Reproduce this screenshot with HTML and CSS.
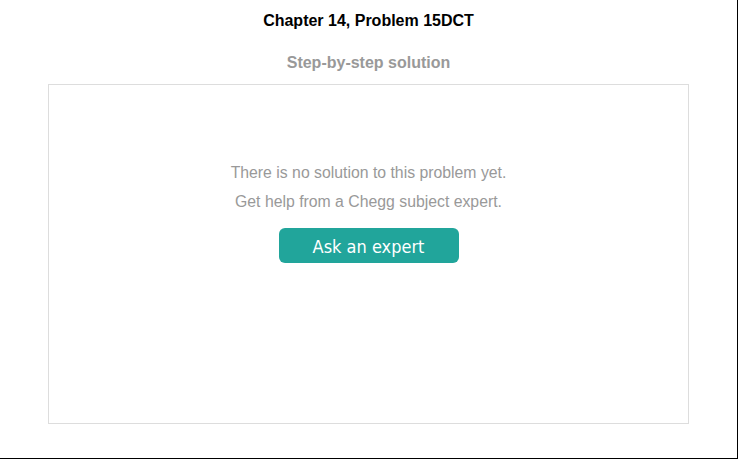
FILE: index.html
```html
<!DOCTYPE html>
<html>
<head>
<meta charset="utf-8">
<link rel="stylesheet" href="styles.css">
</head>
<body>
<div class="frame">
  <h1 class="title">Chapter 14, Problem 15DCT</h1>
  <h2 class="subtitle">Step-by-step solution</h2>
  <div class="box">
    <p class="msg">There is no solution to this problem yet.</p>
    <p class="msg">Get help from a Chegg subject expert.</p>
    <button class="ask">Ask an expert</button>
  </div>
</div>
</body>
</html>
```
FILE: styles.css
```css
html, body { margin: 0; padding: 0; background: #fff; }
.frame {
  box-sizing: border-box;
  width: 738px;
  height: 459px;
  border-right: 1px solid #000;
  border-bottom: 1px solid #000;
  font-family: "Liberation Sans", Arial, sans-serif;
  display: flex;
  flex-direction: column;
  align-items: center;
  padding-top: 11px;
}
.title {
  margin: 0;
  font-size: 16px;
  font-weight: bold;
  color: #000;
  line-height: 20px;
}
.subtitle {
  margin: 22px 0 0;
  font-size: 16px;
  font-weight: bold;
  color: #999;
  line-height: 20px;
}
.box {
  box-sizing: border-box;
  margin-top: 11px;
  width: 641px;
  height: 340px;
  border: 1px solid #ddd;
  display: flex;
  flex-direction: column;
  align-items: center;
  padding-top: 78px;
}
.msg {
  margin: 0 0 9px;
  font-size: 15.8px;
  line-height: 20px;
  color: #999;
}
.ask {
  margin-top: 7px;
  width: 180px;
  height: 35px;
  border: none;
  border-radius: 6px;
  background: #21a59b;
  color: #fff;
  font-family: "DejaVu Sans Condensed", "DejaVu Sans", Verdana, sans-serif;
  font-size: 18px;
  padding: 2px 0 0;
}
```
